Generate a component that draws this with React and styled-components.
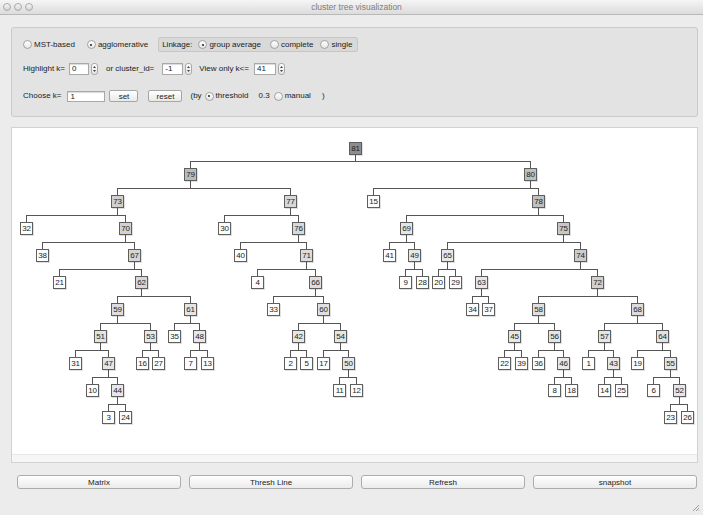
import styled, { createGlobalStyle } from "styled-components";

const GlobalStyle = createGlobalStyle`
  html, body { margin: 0; padding: 0; background: #ececec; }
  body {
    font-family: "Liberation Sans", Arial, sans-serif;
    font-size: 8px;
    color: #222;
  }
`;

// tree data: parent -> [left, right]
const TREE = {
  81: [79, 80],
  79: [73, 77], 73: [32, 70], 70: [38, 67], 67: [21, 62], 62: [59, 61],
  59: [51, 53], 51: [31, 47], 47: [10, 44], 44: [3, 24], 53: [16, 27],
  61: [35, 48], 48: [7, 13],
  77: [30, 76], 76: [40, 71], 71: [4, 66], 66: [33, 60], 60: [42, 54],
  42: [2, 5], 54: [17, 50], 50: [11, 12],
  80: [15, 78], 78: [69, 75], 69: [41, 49], 49: [9, 28], 75: [65, 74],
  65: [20, 29], 74: [63, 72], 63: [34, 37], 72: [58, 68], 58: [45, 56],
  45: [22, 39], 56: [36, 46], 46: [8, 18], 68: [57, 64], 57: [1, 43],
  43: [14, 25], 64: [19, 55], 55: [6, 52], 52: [23, 26],
};

// node centre x on the page
const X = {
  81: 355.5, 79: 190, 80: 530,
  73: 117, 77: 290, 15: 373, 78: 538,
  32: 26, 70: 125, 30: 224, 76: 298, 69: 406, 75: 563,
  38: 42.5, 67: 134, 40: 240, 71: 306, 41: 389, 49: 414, 65: 447, 74: 580,
  21: 59, 62: 141.5, 4: 257, 66: 315, 9: 405, 28: 422, 20: 438, 29: 455, 63: 481, 72: 597,
  59: 117.5, 61: 190.5, 33: 273, 60: 323, 34: 472, 37: 488, 58: 538, 68: 637,
  51: 100.5, 53: 150.5, 35: 174.5, 48: 199.5, 42: 298.5, 54: 340, 45: 514, 56: 554, 57: 604.5, 64: 662,
  31: 75.5, 47: 108.5, 16: 142, 27: 158.5, 7: 190.5, 13: 207, 2: 290.5, 5: 306.5, 17: 323, 50: 348,
  22: 504.5, 39: 521, 36: 538, 46: 563, 1: 588, 43: 613, 19: 637, 55: 670.5,
  10: 92, 44: 117.5, 11: 339.5, 12: 356, 8: 554.5, 18: 571, 14: 604.5, 25: 621, 6: 653.5, 52: 679.5,
  3: 108.5, 24: 125.5, 23: 670.5, 26: 687,
};

const OX = 12;
const OY = 128;
const levelY = (l) => 148 + 26.9 * l;

const buildTree = () => {
  const nodes = [];
  const lines = [];
  const walk = (id, lvl) => {
    const left = Math.round(X[id] - OX - 6.5);
    const top = Math.round(levelY(lvl) - OY - 6.5);
    const cx = left + 6.5;
    const kids = (TREE[id] || []).map((k) => walk(k, lvl + 1));
    const size = kids.length ? kids.reduce((s, k) => s + k.size, 0) : 1;
    if (kids.length) {
      const barY = kids[0].top - 6.5;
      lines.push(`M${cx} ${top + 13}V${barY}`);
      lines.push(`M${kids[0].cx - 0.5} ${barY}H${kids[kids.length - 1].cx + 0.5}`);
      kids.forEach((k) => lines.push(`M${k.cx} ${barY}V${k.top}`));
    }
    nodes.push({ id, left, top, size, leaf: !kids.length });
    return { cx, top, size };
  };
  walk(81, 0);
  return { nodes, lines };
};

const { nodes, lines } = buildTree();

const shadeOf = (n) => {
  if (n.leaf) return "#fdfdfd";
  const g = Math.round(236 - 95 * (n.size / 41));
  return `rgb(${g},${g},${g})`;
};

const Window = styled.div`
  width: 703px;
  height: 515px;
  position: relative;
  overflow: hidden;
  background: #ececec;
`;

const TitleBar = styled.div`
  height: 14px;
  border-bottom: 1px solid #b9b9b9;
  background: linear-gradient(#f5f5f5, #dcdcdc);
  display: grid;
  grid-template-columns: 40px 1fr 40px;
  align-items: center;
`;

const Lights = styled.div`
  display: flex;
  gap: 3px;
  padding-left: 3px;
`;

const Light = styled.span`
  width: 6px;
  height: 6px;
  border-radius: 50%;
  border: 1px solid #a9a9a9;
  background: linear-gradient(#f6f6f6, #d4d4d4);
`;

const Title = styled.div`
  text-align: center;
  font-size: 8.5px;
  color: #7d7d7d;
  padding-left: 10px;
`;

const Body = styled.div`
  padding: 12px 5px 0 11px;
`;

const ControlPanel = styled.div`
  height: 90px;
  box-sizing: border-box;
  border: 1px solid #cbcbcb;
  border-radius: 3px;
  background: #e3e3e3;
  padding: 9px 0 0 11px;
  display: flex;
  flex-direction: column;
`;

const Row = styled.div`
  display: flex;
  align-items: center;
  height: ${(p) => p.$h}px;
  margin-top: ${(p) => p.$top || 0}px;
`;

const Text = styled.span`
  margin-left: ${(p) => p.$ml || 0}px;
  white-space: nowrap;
  line-height: 1;
`;

const Radio = styled.span`
  position: relative;
  flex: none;
  width: 9px;
  height: 9px;
  box-sizing: border-box;
  border-radius: 50%;
  border: 1px solid #a2a2a2;
  background: linear-gradient(#ffffff, #e6e6e6);
  margin-left: ${(p) => p.$ml || 0}px;
  margin-right: 2px;
  &::after {
    content: "";
    display: ${(p) => (p.$on ? "block" : "none")};
    position: absolute;
    left: 2.5px;
    top: 2.5px;
    width: 2px;
    height: 2px;
    border-radius: 50%;
    background: #222;
  }
`;

const LinkageBox = styled.div`
  display: flex;
  align-items: center;
  height: 15px;
  box-sizing: border-box;
  border: 1px solid #c6c6c6;
  border-radius: 2px;
  background: #d9d9d9;
  padding: 0 5px 0 3px;
  margin-left: 10px;
`;

const Field = styled.input`
  width: ${(p) => p.$w}px;
  height: ${(p) => p.$h}px;
  box-sizing: border-box;
  margin: 0 0 0 ${(p) => p.$ml || 0}px;
  padding: 0 2px;
  border: 1px solid #a8a8a8;
  box-shadow: inset 0 1px 1px rgba(0, 0, 0, 0.15);
  background: #fff;
  font-family: "Liberation Sans", Arial, sans-serif;
  font-size: 8px;
  color: #222;
  outline: none;
`;

const StepperBox = styled.span`
  width: 7px;
  height: 12px;
  box-sizing: border-box;
  margin-left: 2px;
  border: 1px solid #a9a9a9;
  border-radius: 3px;
  background: linear-gradient(#ffffff, #e4e4e4);
  display: flex;
  align-items: center;
  justify-content: center;
`;

const SmallButton = styled.button`
  width: ${(p) => p.$w}px;
  height: 12px;
  margin-left: ${(p) => p.$ml || 0}px;
  padding: 0;
  box-sizing: border-box;
  border: 1px solid #a6a6a6;
  border-radius: 2px;
  background: linear-gradient(#ffffff, #e9e9e9);
  font-family: "Liberation Sans", Arial, sans-serif;
  font-size: 8px;
  color: #222;
`;

const TreePanel = styled.div`
  margin-top: 10px;
  height: 336px;
  box-sizing: border-box;
  border: 1px solid #d2d2d2;
  background: #fff;
  display: flex;
  flex-direction: column;
`;

const TreeCanvas = styled.div`
  position: relative;
  flex: 1;
`;

const Wires = styled.svg`
  position: absolute;
  inset: 0;
  width: 100%;
  height: 100%;
`;

const Node = styled.div`
  position: absolute;
  width: 13px;
  height: 13px;
  box-sizing: border-box;
  border: 1px solid #5e5e5e;
  background: ${(p) => p.$fill};
  box-shadow: 1px 1px 0 rgba(0, 0, 0, 0.12);
  font-size: 8px;
  line-height: 11px;
  text-align: center;
  letter-spacing: -0.3px;
  color: #1e1e1e;
`;

const ScrollStrip = styled.div`
  height: 7px;
  background: #f6f6f6;
  border-top: 1px solid #e8e8e8;
`;

const ButtonRow = styled.div`
  margin-top: 12px;
  padding: 0 1px 0 6px;
  display: grid;
  grid-template-columns: repeat(4, 1fr);
  gap: 8px;
`;

const BigButton = styled.button`
  height: 14px;
  padding: 0;
  border: 1px solid #acacac;
  border-radius: 3px;
  background: linear-gradient(#ffffff, #ebebeb);
  font-family: "Liberation Sans", Arial, sans-serif;
  font-size: 8px;
  color: #222;
`;

const Grip = styled.svg`
  position: absolute;
  right: 3px;
  bottom: 3px;
`;

const Stepper = () => (
  <StepperBox>
    <svg width="3" height="8" viewBox="0 0 3 8">
      <path d="M0 3L1.5 1L3 3Z M0 5L1.5 7L3 5Z" fill="#444" />
    </svg>
  </StepperBox>
);

const App = () => {
  return (
    <Window>
      <GlobalStyle />
      <TitleBar>
        <Lights>
          <Light />
          <Light />
          <Light />
        </Lights>
        <Title>cluster tree visualization</Title>
        <span />
      </TitleBar>
      <Body>
        <ControlPanel>
          <Row $h={15}>
            <Radio />
            <Text>MST-based</Text>
            <Radio $ml={12} $on />
            <Text>agglomerative</Text>
            <LinkageBox>
              <Text>Linkage:</Text>
              <Radio $ml={6} $on />
              <Text>group average</Text>
              <Radio $ml={9} />
              <Text>complete</Text>
              <Radio $ml={7} />
              <Text>single</Text>
            </LinkageBox>
          </Row>
          <Row $h={13} $top={10}>
            <Text>Highlight k=</Text>
            <Field $w={20} $h={12} $ml={4} defaultValue="0" readOnly />
            <Stepper />
            <Text $ml={8}>or cluster_id=</Text>
            <Field $w={21} $h={12} $ml={8} defaultValue="-1" readOnly />
            <Stepper />
            <Text $ml={7}>View only k&lt;=</Text>
            <Field $w={22} $h={12} $ml={5} defaultValue="41" readOnly />
            <Stepper />
          </Row>
          <Row $h={12} $top={15}>
            <Text>Choose k=</Text>
            <Field $w={38} $h={11} $ml={6} defaultValue="1" readOnly />
            <SmallButton $w={29} $ml={4}>set</SmallButton>
            <SmallButton $w={34} $ml={10}>reset</SmallButton>
            <Text $ml={8}>(by</Text>
            <Radio $ml={3} $on />
            <Text>threshold</Text>
            <Text $ml={10}>0.3</Text>
            <Radio $ml={4} />
            <Text>manual</Text>
            <Text $ml={11}>)</Text>
          </Row>
        </ControlPanel>

        <TreePanel>
          <TreeCanvas>
            <Wires>
              <path
                d={lines.join("")}
                stroke="#555"
                strokeWidth="1"
                fill="none"
                shapeRendering="crispEdges"
              />
            </Wires>
            {nodes.map((n) => (
              <Node key={n.id} $fill={shadeOf(n)} style={{ left: n.left, top: n.top }}>
                {n.id}
              </Node>
            ))}
          </TreeCanvas>
          <ScrollStrip />
        </TreePanel>

        <ButtonRow>
          <BigButton>Matrix</BigButton>
          <BigButton>Thresh Line</BigButton>
          <BigButton>Refresh</BigButton>
          <BigButton>snapshot</BigButton>
        </ButtonRow>
      </Body>
      <Grip width="8" height="8" viewBox="0 0 8 8">
        <path d="M7 1L1 7M7 4L4 7M7 6.5L6.5 7" stroke="#9a9a9a" strokeWidth="1" />
      </Grip>
    </Window>
  );
};

export default App;
